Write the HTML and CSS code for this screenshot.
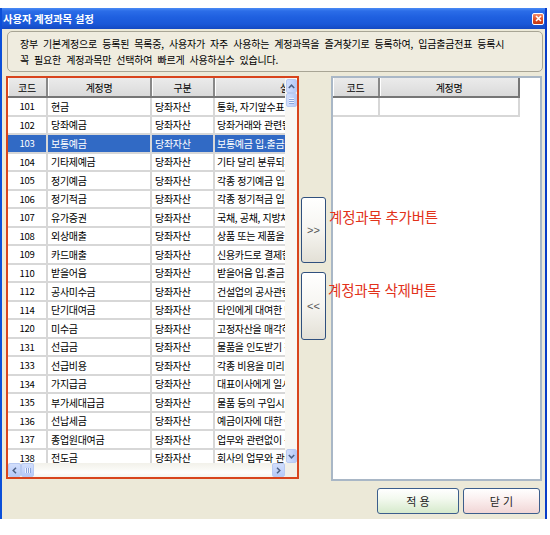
FILE: index.html
```html
<!DOCTYPE html>
<html lang="ko">
<head>
<meta charset="utf-8">
<title>사용자 계정과목 설정</title>
<link rel="stylesheet" href="styles.css">
</head>
<body>
<div class="window">
  <div class="titlebar">
    <span class="title">사용자 계정과목 설정</span>
    <span class="close"><svg width="7" height="7" viewBox="0 0 7 7"><path d="M1 1 L6 6 M6 1 L1 6" stroke="#fff" stroke-width="1.6"/></svg></span>
  </div>
  <div class="content">
    <div class="desc">
      <p>장부 기본계정으로 등록된 목록중, 사용자가 자주 사용하는 계정과목을 즐겨찾기로 등록하여, 입금출금전표 등록시</p>
      <p>꼭 필요한 계정과목만 선택하여 빠르게 사용하실수 있습니다.</p>
    </div>
    <div class="main">
      <div class="grid-box">
        <div class="viewport">
          <div class="grid">
            <div class="row head"><div class="cell c-code">코드</div><div class="cell c-name">계정명</div><div class="cell c-type">구분</div><div class="cell c-desc">설명</div></div>
            <div class="row"><div class="cell c-code">101</div><div class="cell c-name">현금</div><div class="cell c-type">당좌자산</div><div class="cell c-desc">통화, 자기앞수표 등 현금성 자산</div></div>
            <div class="row"><div class="cell c-code">102</div><div class="cell c-name">당좌예금</div><div class="cell c-type">당좌자산</div><div class="cell c-desc">당좌거래와 관련된 예금</div></div>
            <div class="row sel"><div class="cell c-code">103</div><div class="cell c-name">보통예금</div><div class="cell c-type">당좌자산</div><div class="cell c-desc">보통예금 입.출금 내역</div></div>
            <div class="row"><div class="cell c-code">104</div><div class="cell c-name">기타제예금</div><div class="cell c-type">당좌자산</div><div class="cell c-desc">기타 달리 분류되지 않는 예금</div></div>
            <div class="row"><div class="cell c-code">105</div><div class="cell c-name">정기예금</div><div class="cell c-type">당좌자산</div><div class="cell c-desc">각종 정기예금 입.출금</div></div>
            <div class="row"><div class="cell c-code">106</div><div class="cell c-name">정기적금</div><div class="cell c-type">당좌자산</div><div class="cell c-desc">각종 정기적금 입.출금</div></div>
            <div class="row"><div class="cell c-code">107</div><div class="cell c-name">유가증권</div><div class="cell c-type">당좌자산</div><div class="cell c-desc">국채, 공채, 지방채 등 유가증권</div></div>
            <div class="row"><div class="cell c-code">108</div><div class="cell c-name">외상매출</div><div class="cell c-type">당좌자산</div><div class="cell c-desc">상품 또는 제품을 외상으로 판매</div></div>
            <div class="row"><div class="cell c-code">109</div><div class="cell c-name">카드매출</div><div class="cell c-type">당좌자산</div><div class="cell c-desc">신용카드로 결제한 매출</div></div>
            <div class="row"><div class="cell c-code">110</div><div class="cell c-name">받을어음</div><div class="cell c-type">당좌자산</div><div class="cell c-desc">받을어음 입.출금 내역</div></div>
            <div class="row"><div class="cell c-code">112</div><div class="cell c-name">공사미수금</div><div class="cell c-type">당좌자산</div><div class="cell c-desc">건설업의 공사관련 미수금</div></div>
            <div class="row"><div class="cell c-code">114</div><div class="cell c-name">단기대여금</div><div class="cell c-type">당좌자산</div><div class="cell c-desc">타인에게 대여한 단기 자금</div></div>
            <div class="row"><div class="cell c-code">120</div><div class="cell c-name">미수금</div><div class="cell c-type">당좌자산</div><div class="cell c-desc">고정자산을 매각하고 받지 못한 금액</div></div>
            <div class="row"><div class="cell c-code">131</div><div class="cell c-name">선급금</div><div class="cell c-type">당좌자산</div><div class="cell c-desc">물품을 인도받기 전에 지급한 대금</div></div>
            <div class="row"><div class="cell c-code">133</div><div class="cell c-name">선급비용</div><div class="cell c-type">당좌자산</div><div class="cell c-desc">각종 비용을 미리 지급한 금액</div></div>
            <div class="row"><div class="cell c-code">134</div><div class="cell c-name">가지급금</div><div class="cell c-type">당좌자산</div><div class="cell c-desc">대표이사에게 일시 지급한 금액</div></div>
            <div class="row"><div class="cell c-code">135</div><div class="cell c-name">부가세대급금</div><div class="cell c-type">당좌자산</div><div class="cell c-desc">물품 등의 구입시 부담한 부가세</div></div>
            <div class="row"><div class="cell c-code">136</div><div class="cell c-name">선납세금</div><div class="cell c-type">당좌자산</div><div class="cell c-desc">예금이자에 대한 원천징수 세금</div></div>
            <div class="row"><div class="cell c-code">137</div><div class="cell c-name">종업원대여금</div><div class="cell c-type">당좌자산</div><div class="cell c-desc">업무와 관련없이 종업원에게 대여</div></div>
            <div class="row"><div class="cell c-code">138</div><div class="cell c-name">전도금</div><div class="cell c-type">당좌자산</div><div class="cell c-desc">회사의 업무와 관련된 전도금</div></div>
          </div>
        </div>
        <div class="vscroll">
          <span class="sb-btn"><svg width="7" height="5" viewBox="0 0 7 5"><path d="M0.8 4 L3.5 1.2 L6.2 4" stroke="#4D6185" stroke-width="1.5" fill="none"/></svg></span>
          <span class="sb-btn thumb-v"><i></i><i></i><i></i></span>
          <span class="sb-fill"></span>
          <span class="sb-btn"><svg width="7" height="5" viewBox="0 0 7 5"><path d="M0.8 1 L3.5 3.8 L6.2 1" stroke="#4D6185" stroke-width="1.5" fill="none"/></svg></span>
        </div>
        <div class="hscroll">
          <span class="sb-btn hb"><svg width="5" height="7" viewBox="0 0 5 7"><path d="M4 0.8 L1.2 3.5 L4 6.2" stroke="#4D6185" stroke-width="1.5" fill="none"/></svg></span>
          <span class="sb-btn hb thumb-h"><i></i><i></i><i></i></span>
          <span class="sb-fill"></span>
          <span class="sb-btn hb"><svg width="5" height="7" viewBox="0 0 5 7"><path d="M1 0.8 L3.8 3.5 L1 6.2" stroke="#4D6185" stroke-width="1.5" fill="none"/></svg></span>
        </div>
        <div class="corner"></div>
      </div>
      <div class="mid">
        <button class="move move-add">&gt;&gt;</button>
        <button class="move move-del">&lt;&lt;</button>
      </div>
      <div class="picked">
        <div class="prow phead"><div class="pcell p-code">코드</div><div class="pcell p-name">계정명</div></div>
        <div class="prow"><div class="pcell p-code"></div><div class="pcell p-name"></div></div>
      </div>
      <span class="note note-add">계정과목 추가버튼</span>
      <span class="note note-del">계정과목 삭제버튼</span>
    </div>
    <div class="actions">
      <button class="btn apply">적 용</button>
      <button class="btn shut">닫 기</button>
    </div>
  </div>
</div>
</body>
</html>
```
FILE: styles.css
```css
* { box-sizing: border-box; }
html, body { margin: 0; background: #fff; }
body {
  font-family: "Noto Sans CJK KR", "Noto Sans", sans-serif;
  font-size: 10px;
  color: #000;
}

.window {
  margin-top: 8px;
  width: 547px;
  height: 511px;
  border-left: 2px solid #0B4FD9;
  border-right: 2px solid #0A3DC8;
  background: #ECE9D8;
  display: flex;
  flex-direction: column;
}

.titlebar {
  height: 21px;
  flex: none;
  display: flex;
  align-items: center;
  justify-content: space-between;
  padding: 0 1px 0 1px;
  background: linear-gradient(#4A8BF5 0, #2B6DE8 3px, #1F60E0 9px, #1A58D8 16px, #1449C2 21px);
}
.title {
  color: #fff;
  font-weight: 700;
  font-size: 10.5px;
  letter-spacing: -0.2px;
}
.close {
  width: 12px;
  height: 12px;
  border: 1px solid #fff;
  border-radius: 2px;
  background: linear-gradient(#F28C6C, #DC4A20 60%, #C23A14);
  display: flex;
  align-items: center;
  justify-content: center;
}

.content {
  flex: 1;
  padding: 2px 3px 5px 4px;
  display: flex;
  flex-direction: column;
}

.desc {
  margin: 0 -1px 0 1px;
  height: 41px;
  border: 1px solid #A8A595;
  border-radius: 5px;
  padding: 4px 8px 0 12px;
  background: #EFECDF;
}
.desc p {
  margin: 0;
  line-height: 16px;
  font-size: 10px;
  letter-spacing: -0.2px;
  word-spacing: 2.5px;
  white-space: nowrap;
}

.main {
  position: relative;
  margin-top: 4px;
  height: 405px;
  display: flex;
  align-items: flex-start;
}

.grid-box {
  width: 293px;
  height: 403px;
  border: 2px solid #D8441C;
  display: grid;
  grid-template-columns: 277px 12px;
  grid-template-rows: 385px 14px;
  background: #fff;
}
.viewport { overflow: hidden; }
.grid { width: 360px; }

.row {
  display: flex;
  height: 18.5px;
  border-bottom: 2px solid #D7D7D7;
}
.row.head {
  height: 20px;
  border-bottom: 2px solid #767676;
  background: linear-gradient(#EBEBEB, #DADADA);
}
.row.sel { background: #316AC5; color: #fff; }

.cell {
  display: flex;
  align-items: center;
  border-right: 2px solid #D7D7D7;
  padding-left: 3px;
  white-space: nowrap;
  overflow: hidden;
  letter-spacing: -0.3px;
  flex: none;
}
.head .cell {
  justify-content: center;
  padding-left: 0;
  border-right: 2px solid #888;
  box-shadow: inset 1px 0 #fff;
}
.c-code { width: 40px; justify-content: center; padding-left: 0; font-size: 9.5px; }
.head .c-code { font-size: 10px; }
.c-name { width: 104px; }
.c-type { width: 63px; }
.c-desc { width: 150px; padding-left: 2px; }

.vscroll {
  display: flex;
  flex-direction: column;
  background: #F8F7F3;
  padding: 1px 0 0 1px;
}
.hscroll {
  display: flex;
  background: linear-gradient(#F2F1EA, #FEFEFC 70%, #F4F3EE);
}
.corner { background: #F1EFE7; }
.sb-fill { flex: 1; }
.sb-btn {
  width: 11px;
  height: 14px;
  flex: none;
  display: flex;
  align-items: center;
  justify-content: center;
  gap: 1px;
  border: 1px solid #B8CAF2;
  border-radius: 2px;
  background: linear-gradient(90deg, #D2DEFB, #C2D3FB 60%, #B6C9F6);
}
.sb-btn.hb {
  width: 13px;
  height: 14px;
  background: linear-gradient(#D2DEFB, #C2D3FB 60%, #B6C9F6);
}
.thumb-v { flex-direction: column; gap: 1px; }
.thumb-v i {
  display: block;
  width: 5px;
  height: 1px;
  background: #EEF3FF;
  box-shadow: 0 1px #8CA6DC;
}
.thumb-h { width: 12px; }
.thumb-h i {
  display: block;
  width: 1px;
  height: 5px;
  background: #EEF3FF;
  box-shadow: 1px 0 #8CA6DC;
}

.mid {
  margin-left: 2px;
  width: 25px;
  padding-top: 121px;
  display: flex;
  flex-direction: column;
  gap: 9px;
  flex: none;
}
.move {
  width: 25px;
  padding: 0;
  border: 1px solid #30507E;
  border-radius: 3px;
  background: linear-gradient(#FFFFFF, #F6F5F1 50%, #E3E0D6);
  font-family: "Liberation Sans", sans-serif;
  font-size: 11px;
  color: #555;
  letter-spacing: 0;
}
.move-add { height: 66px; }
.move-del { height: 68px; }

.picked {
  margin-left: 5px;
  width: 211px;
  height: 405px;
  border: 2px solid #A9B7C6;
  background: #fff;
  flex: none;
}
.prow {
  display: flex;
  width: 187px;
  height: 19px;
  border-bottom: 2px solid #D7D7D7;
}
.prow.phead {
  height: 20px;
  border-bottom: 2px solid #767676;
  border-right: 2px solid #767676;
  background: linear-gradient(#EBEBEB, #DADADA);
}
.pcell {
  display: flex;
  align-items: center;
  justify-content: center;
  border-right: 2px solid #D7D7D7;
  letter-spacing: -0.3px;
}
.phead .pcell { border-right-color: #888; box-shadow: inset 1px 0 #fff; }
.phead .p-name { border-right: 0; }
.p-code { width: 47px; }
.p-name { flex: 1; }

.note {
  position: absolute;
  color: #E2321A;
  font-size: 14.5px;
  line-height: 20px;
  letter-spacing: -0.2px;
  white-space: nowrap;
}
.note-add { left: 323px; top: 131px; }
.note-del { left: 322px; top: 204px; }

.actions {
  margin-top: 7px;
  display: flex;
  justify-content: flex-end;
  gap: 4px;
  padding-right: 2px;
}
.btn {
  height: 26px;
  padding: 0;
  border: 1px solid #3C5E8C;
  border-radius: 3px;
  font-family: "Noto Sans CJK KR", sans-serif;
  font-size: 11px;
  color: #222;
}
.apply { width: 82px; background: linear-gradient(#FFFFFF, #F3F9EF 40%, #D6EACC); }
.shut { width: 77px; background: linear-gradient(#FFFFFF, #FBF0F0 40%, #F1D6D6); }
```
